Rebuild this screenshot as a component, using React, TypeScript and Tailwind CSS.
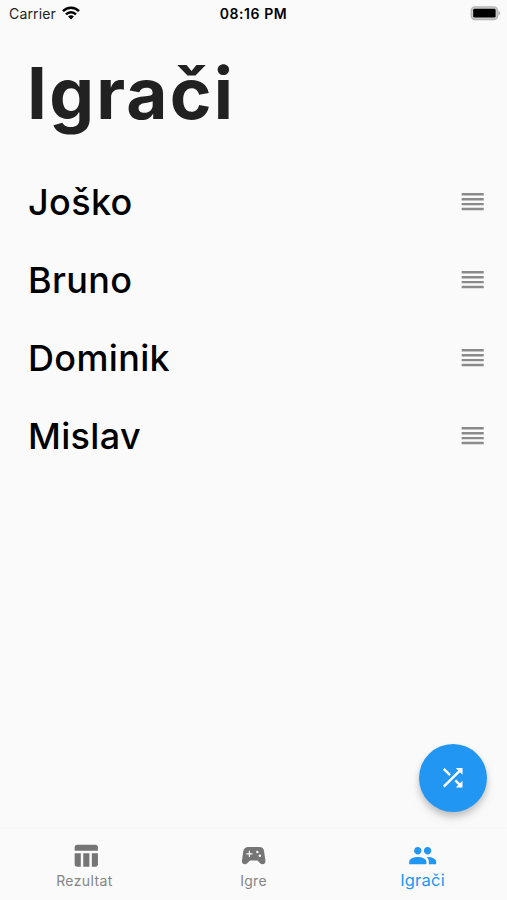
import { MdPeople, MdReorder, MdShuffle, MdSportsEsports, MdTableChart } from 'react-icons/md';

const players = ['Joško', 'Bruno', 'Dominik', 'Mislav'];

function StatusBar() {
  return (
    <header className="grid h-7 grid-cols-3 items-center pl-[9px] pr-1.5 text-black">
      <div className="flex items-center gap-[6px]">
        <span className="text-[14px] leading-7 tracking-[0.15px] text-[#222]">Carrier</span>
        <svg className="-mt-0.5 h-[14px] w-[18px]" viewBox="0 0 18 14" fill="none" stroke="black" strokeWidth="2.5">
          <path d="M1 5.2C5.4 0.6 12.6 0.6 17 5.2" />
          <path d="M4 8.3C6.8 5.4 11.2 5.4 14 8.3" />
          <path d="M9 13.5L6.1 10.5C7.8 8.9 10.2 8.9 11.9 10.5Z" fill="black" stroke="none" />
        </svg>
      </div>
      <span className="-ml-[3px] text-center text-[14px] font-semibold leading-7 tracking-[0.55px]">08:16 PM</span>
      <svg className="-mt-0.5 h-[15px] w-[31px] justify-self-end" viewBox="0 0 31 15">
        <rect x="1.3" y="0.9" width="26.2" height="12.6" rx="3.6" fill="#ccc" stroke="#b4b4b4" strokeWidth="1.4" />
        <rect x="3.2" y="2.8" width="22.4" height="8.8" rx="1.4" fill="black" />
        <path d="M28.4 4.8C30.8 5.8 30.8 8.6 28.4 9.6Z" fill="#b4b4b4" />
      </svg>
    </header>
  );
}

function PlayerRow({ name }: { name: string }) {
  return (
    <li className="flex h-[78px] items-center justify-between pl-7 pr-5">
      <span className="text-[36px] font-[450] leading-[44px] tracking-[0.35px] text-black">{name}</span>
      <MdReorder className="size-[29.4px] text-[#8a8a8a]" />
    </li>
  );
}

function BottomNav() {
  return (
    <nav className="grid h-[71px] grid-cols-3 bg-[#fafafa] text-[#757575] shadow-[0_-1px_3px_rgba(0,0,0,0.025)]">
      <button className="flex flex-col items-center pt-3">
        <MdTableChart className="ml-0.5 size-[29.4px]" />
        <span className="text-[14px] leading-[22px] tracking-[0.4px] text-[#858585]">Rezultat</span>
      </button>
      <button className="flex flex-col items-center pt-3">
        <MdSportsEsports className="size-[29.4px]" />
        <span className="text-[14px] leading-[22px] tracking-[0.3px] text-[#858585]">Igre</span>
      </button>
      <button className="flex flex-col items-center pt-3 text-[#2196f3]">
        <MdPeople className="size-[29.4px]" />
        <span className="text-[16.5px] leading-[20px] tracking-[0.2px]">Igrači</span>
      </button>
    </nav>
  );
}

export default function App() {
  return (
    <div className="relative flex h-[900px] w-[507px] flex-col overflow-hidden bg-[#fafafa] font-['Inter',sans-serif]">
      <StatusBar />
      <h1 className="mt-[22px] pl-[27px] text-[71px] font-bold leading-[86px] tracking-[2.2px] text-[#212121]">Igrači</h1>
      <ul className="mt-[27px] flex-1">
        {players.map((name) => (
          <PlayerRow key={name} name={name} />
        ))}
      </ul>
      <button className="absolute bottom-[88px] right-[20px] flex size-[68px] items-center justify-center rounded-full bg-[#2196f3] text-white shadow-[0_4px_6px_rgba(0,0,0,0.18),0_7px_12px_rgba(0,0,0,0.08)]">
        <MdShuffle className="size-[29.4px]" />
      </button>
      <BottomNav />
    </div>
  );
}
